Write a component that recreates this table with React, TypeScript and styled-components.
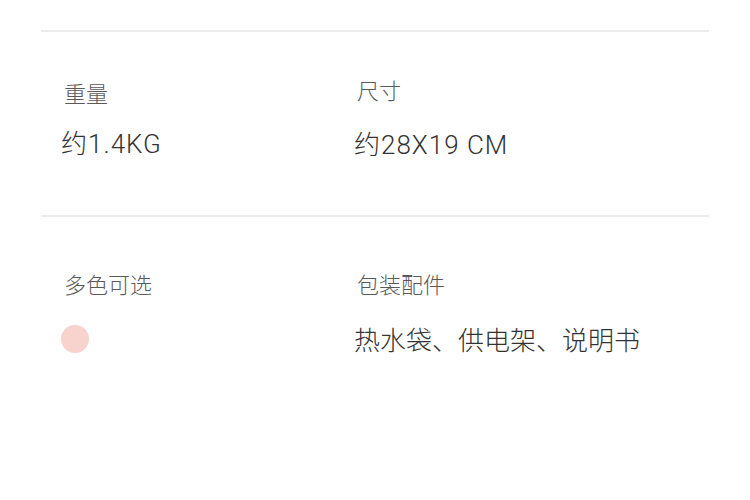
import styled, { createGlobalStyle } from 'styled-components'

const GlobalStyle = createGlobalStyle`
  body {
    margin: 0;
    background: #ffffff;
    font-family: "Noto Sans CJK SC", "Noto Sans", sans-serif;
  }
`;

const Page = styled.div`
  width: 750px;
  height: 500px;
  padding: 30px 41px 0;
  box-sizing: border-box;
  background: #fff;
`;

const Section = styled.section<{ $top: number; $bottom: number }>`
  display: grid;
  grid-template-columns: 293px 1fr;
  padding: ${(p) => p.$top}px 0 ${(p) => p.$bottom}px 20px;
  border-top: 2px solid #ececec;
`;

const Cell = styled.div<{ $gap: number }>`
  display: flex;
  flex-direction: column;
  align-items: flex-start;
  gap: ${(p) => p.$gap}px;
`;

const Label = styled.div<{ $shift?: number }>`
  margin-left: 3px;
  margin-top: ${(p) => p.$shift || 0}px;
  font-size: 22px;
  line-height: 30px;
  font-weight: 300;
  color: #5a5a5a;
`;

const Value = styled.div<{ $spacing?: number }>`
  font-family: "Roboto", "Noto Sans CJK SC", sans-serif;
  font-size: 26px;
  line-height: 34px;
  font-weight: 300;
  letter-spacing: ${(p) => p.$spacing || 0}px;
  color: #333333;
`;

const Swatch = styled.span<{ $color: string }>`
  display: block;
  width: 28px;
  height: 28px;
  margin: 3px 0;
  border-radius: 50%;
  background: ${(p) => p.$color};
`;

const App = () => {
  return (
    <Page>
      <GlobalStyle />
      <Section $top={42} $bottom={53}>
        <Cell $gap={20}>
          <Label $shift={3}>重量</Label>
          <Value $spacing={1}>约1.4KG</Value>
        </Cell>
        <Cell $gap={24}>
          <Label>尺寸</Label>
          <Value $spacing={1}>约28X19 CM</Value>
        </Cell>
      </Section>
      <Section $top={51} $bottom={40}>
        <Cell $gap={24}>
          <Label>多色可选</Label>
          <Swatch $color="#f8d3cd" />
        </Cell>
        <Cell $gap={26}>
          <Label>包装配件</Label>
          <Value>热水袋、供电架、说明书</Value>
        </Cell>
      </Section>
    </Page>
  )
}

export default App;
